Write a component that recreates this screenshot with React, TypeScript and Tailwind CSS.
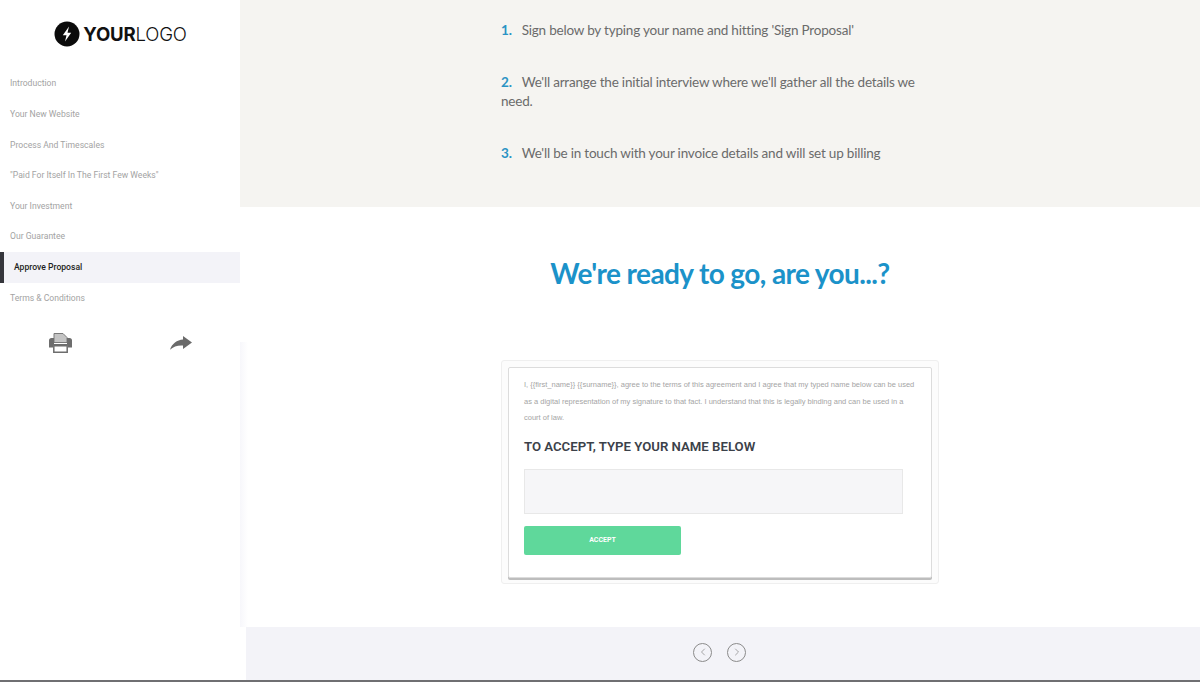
import React from 'react';
import { ChevronLeft, ChevronRight } from 'lucide-react';

const navItems = [
  'Introduction',
  'Your New Website',
  'Process And Timescales',
  '"Paid For Itself In The First Few Weeks"',
  'Your Investment',
  'Our Guarantee',
  'Approve Proposal',
  'Terms & Conditions',
];

const steps = [
  { n: '1.', text: "Sign below by typing your name and hitting 'Sign Proposal'", cls: 'mt-0' },
  { n: '2.', text: "We'll arrange the initial interview where we'll gather all the details we need.", cls: 'mt-[32px]' },
  { n: '3.', text: "We'll be in touch with your invoice details and will set up billing", cls: 'mt-[32px]' },
];

const agreement = [
  'I, {{first_name}} {{surname}}, agree to the terms of this agreement and I agree that my typed name below can be used',
  'as a digital representation of my signature to that fact. I understand that this is legally binding and can be used in a',
  'court of law.',
];

const PrinterIcon = () => (
  <svg width="23" height="20" viewBox="0 0 23 20" fill="none">
    <path d="M5 0.5h9l4 4v5H5z" fill="#c4c4c4" stroke="#7a7a7a" strokeWidth="1" />
    <path d="M2.5 5H5v6h13V5h2.5A2.500 2.500 0 0 1 23 7.500V14.500h-4V12H4v2.500H0V7.500A2.500 2.500 0 0 1 2.500 5z" fill="#6d6d6d" />
    <path d="M4.800 12.800h13.400v6.400H4.800z" fill="#fff" stroke="#6d6d6d" strokeWidth="1.500" />
  </svg>
);

const ShareIcon = () => (
  <svg width="22" height="14" viewBox="0 0 22 14" fill="#6a6a6a">
    <path d="M13 0l9 6.500-9 6.500V9.500C8 9 3.500 10.500 0 13.800 2 7.500 7 4 13 3.500z" />
  </svg>
);

const App: React.FC = () => {
  return (
    <div className="relative flex h-[682px] w-[1200px] overflow-hidden bg-white font-['Roboto',sans-serif]">
      <aside className="w-[240px] shrink-0 bg-white">
        <div className="flex h-[68px] items-center justify-center gap-[3px] pl-[1px]">
          <svg width="26" height="26" viewBox="0 0 26 26">
            <circle cx="13" cy="13" r="12.500" fill="#0b0b0b" />
            <path d="M15 5.500 8.800 14.200h3.700L11 20.500l6.200-8.700h-3.700z" fill="#fff" />
          </svg>
          <div className="font-['Inter',sans-serif] text-[18.600px] leading-[26px] tracking-[-0.2px] text-[#111]">
            <span className="font-bold">YOUR</span>
            <span className="font-light">LOGO</span>
          </div>
        </div>
        <nav className="pt-[0.500px]">
          {navItems.map((item) =>
            item === 'Approve Proposal' ? (
              <div key={item} className="flex h-[30.600px] items-center border-l-[4px] border-[#35363c] bg-[#f3f3f8] pl-[10px] text-[8.600px] font-medium text-[#1d1e22]">
                {item}
              </div>
            ) : (
              <div key={item} className="flex h-[30.600px] items-center pl-[10px] text-[8.600px] text-[#a3a3a3]">
                {item}
              </div>
            ),
          )}
        </nav>
        <div className="mt-[19.500px] flex items-center pl-[49px]">
          <PrinterIcon />
          <div className="ml-[98px]">
            <ShareIcon />
          </div>
        </div>
      </aside>

      <main className="flex min-w-0 flex-1 flex-col">
        <section className="h-[207px] bg-[#f5f4f1] pl-[261px] pr-[275px] pt-[21px] font-['Lato',sans-serif] text-[13.500px] leading-[19.500px] tracking-[-0.2px] text-[#6b6b6b]">
          {steps.map((s) => (
            <p key={s.n} className={s.cls}>
              <span className="mr-[10px] font-bold text-[#2a93c4]">{s.n}</span>
              {s.text}
            </p>
          ))}
        </section>

        <section className="flex flex-1 flex-col items-center bg-white">
          <h1 className="mt-[46px] font-['Lato',sans-serif] text-[28px] font-bold leading-[40px] tracking-[-0.6px] text-[#1b92c9]">
            We're ready to go, are you...?
          </h1>
          <div className="mt-[67px] h-[224px] w-[438px] rounded-[3px] border border-[#efefef] bg-[#fcfcfc] p-[6px]">
            <div className="h-[211px] rounded-[2px] border border-[#dcdcdc] bg-white px-[15px] pt-[9px] shadow-[0_2px_0_#bdbdbd]">
              <div className="whitespace-nowrap font-['Liberation_Sans',sans-serif] text-[7.500px] leading-[16.500px] text-[#a5a5a5]">
                {agreement.map((line) => (
                  <p key={line}>{line}</p>
                ))}
              </div>
              <h2 className="mt-[10px] text-[13.200px] font-semibold leading-[20px] text-[#3b4149]">TO ACCEPT, TYPE YOUR NAME BELOW</h2>
              <div className="mt-[12px] h-[45px] w-[379px] border border-[#e8e8e8] bg-[#f6f6f8]" />
              <button className="mt-[12px] block h-[29px] w-[157px] rounded-[2px] bg-[#5fd89b] text-[7px] font-bold text-white">ACCEPT</button>
            </div>
          </div>
        </section>

        <footer className="ml-[6px] flex h-[55px] items-center justify-center gap-[15px] bg-[#f3f3f8] pb-[5px] pr-[7px]">
          <span className="flex h-[19px] w-[19px] items-center justify-center rounded-full border border-[#8b8b8b] text-[#8b8b8b]">
            <ChevronLeft size={12} strokeWidth={1.5} />
          </span>
          <span className="flex h-[19px] w-[19px] items-center justify-center rounded-full border border-[#8b8b8b] text-[#8b8b8b]">
            <ChevronRight size={12} strokeWidth={1.5} />
          </span>
        </footer>
      </main>

      {/* soft edge of the sidebar over the white section */}
      <div className="absolute left-[240px] top-[342px] h-[285px] w-[8px] bg-gradient-to-r from-[#f7f7fb] to-white" />
      {/* dark rule along the bottom of the window */}
      <div className="absolute bottom-0 left-0 h-[2px] w-full bg-[#6f6f72]" />
    </div>
  );
};

export default App;
